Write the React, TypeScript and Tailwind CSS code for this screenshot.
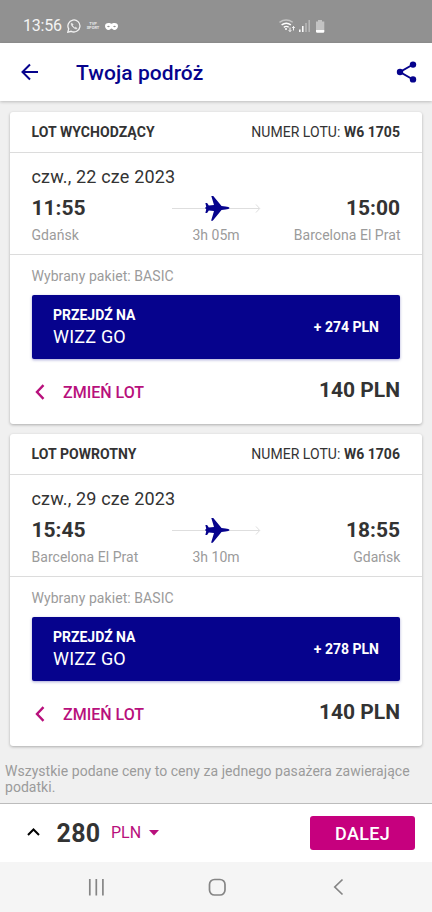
import React from "react";

type Flight = {
  title: string;
  number: string;
  date: string;
  departure: string;
  arrival: string;
  from: string;
  to: string;
  duration: string;
  upgrade: string;
};

const flights: Flight[] = [
  {
    title: "LOT WYCHODZĄCY",
    number: "W6 1705",
    date: "czw., 22 cze 2023",
    departure: "11:55",
    arrival: "15:00",
    from: "Gdańsk",
    to: "Barcelona El Prat",
    duration: "3h 05m",
    upgrade: "+ 274 PLN",
  },
  {
    title: "LOT POWROTNY",
    number: "W6 1706",
    date: "czw., 29 cze 2023",
    departure: "15:45",
    arrival: "18:55",
    from: "Barcelona El Prat",
    to: "Gdańsk",
    duration: "3h 10m",
    upgrade: "+ 278 PLN",
  },
];

function WhatsAppIcon() {
  return (
    <svg width="14" height="14" viewBox="0 0 14 14" fill="none" stroke="#f2f2f2">
      <path d="M.8 13.200l.9-3.300A6 6 0 1 1 4.200 12.300z" strokeWidth="1.300" />
      <path d="M4.700 3.900c-1 .9-.4 2.600 1.200 4.200s3.400 2.300 4.300 1.300l-1.500-1.200-.9.600C6.900 8.400 6 7.500 5.500 6.500l.6-.8z" fill="#f2f2f2" strokeWidth=".5" />
    </svg>
  );
}

function MaskIcon() {
  return (
    <svg width="13" height="9" viewBox="0 0 13 9">
      <path fill="#fff" fillRule="evenodd" d="M3.500 1C5 1 5.600 1.700 6.500 1.700S8 1 9.500 1C11.700 1 13 2.200 13 4c0 2.300-1.600 4-3.600 4C7.900 8 7.400 6.600 6.500 6.600S5.100 8 3.600 8C1.600 8 0 6.300 0 4c0-1.800 1.300-3 3.500-3zM2 4.600c.9.900 2.100.9 2.900 0-.8-1.100-2.100-1.100-2.900 0zm6.100 0c.8.900 2 .9 2.900 0-.8-1.100-2.100-1.100-2.900 0z" />
    </svg>
  );
}

function StatusIcons() {
  return (
    <svg width="48" height="16" viewBox="278 18 48 16" fill="none">
      <path d="M279.500 22.300q6.700-4.600 13.200 0" stroke="#c3c3c3" strokeWidth="1.400" />
      <path d="M281.600 24.900q4.700-3.400 9.300 0M283.800 27.300q2.600-1.800 4.900 0" stroke="#fff" strokeWidth="1.400" />
      <circle cx="286" cy="29" r="1" fill="#fff" />
      <path d="M290 27.500v4m-1.300-1.300 1.300 1.400 1.300-1.400M293.500 30.500V26.500m-1.300 1.400 1.300-1.400 1.300 1.400" stroke="#fff" strokeWidth=".9" />
      <path d="M299.800 29.500V32M302.800 26v6" stroke="#fff" strokeWidth="1.500" />
      <path d="M306 23v9M309.200 20v12" stroke="#b9b9b9" strokeWidth="1.500" />
      <path d="M316 21.500h2V20h4v1.500h2.300V30H316z" fill="#c3c3c3" />
      <path d="M316 30h8.300v1.500q0 1.200-1.200 1.200h-5.900q-1.200 0-1.200-1.200z" fill="#fff" />
    </svg>
  );
}

function PlaneRoute() {
  return (
    <svg className="block" width="90" height="26" viewBox="171 195 90 26" fill="none">
      <path d="M172 207.500h87.500M256 203.500l3.700 4-3.700 4" stroke="#dedede" strokeWidth="1" />
      <path
        fill="#06038d"
        d="M229.500 207c0 .8-2 1.300-4 1.500l-4 .6-1.800 2.200-7 8.400h-1.600l2.900-9.600-5.200-.6-1.700 2.500h-1.700l.8-3.800-1.200-1.200 1.200-1.200-.8-3.800h1.700l1.700 2.500 5.200-.6-2.900-9.600h1.600l7 8.400 1.800 2.200 4 .6c2 .2 4 .7 4 1.500z"
      />
    </svg>
  );
}

function FlightCard({ f }: { f: Flight }) {
  return (
    <section className="h-[312px] rounded-[3px] bg-white shadow-[0_1px_3px_rgba(0,0,0,0.28)]">
      <div className="flex h-[41px] items-center justify-between border-b border-[#dcdcdc] pr-[22px] pl-[21.500px] text-[14px] leading-5">
        <h2 className="font-bold tracking-[0.070px]">{f.title}</h2>
        <p className="tracking-[0.03px]">
          NUMER LOTU: <b>{f.number}</b>
        </p>
      </div>
      <div className="h-[102px] border-b border-[#dcdcdc] pr-[22px] pl-[21.500px] pt-[13px]">
        <p className="text-[18px] leading-[22px] tracking-[0.170px]">{f.date}</p>
        <div className="grid grid-cols-[1fr_90px_1fr] pt-2 text-[21px] leading-6 font-bold">
          <span>{f.departure}</span>
          <PlaneRoute />
          <span className="text-right">{f.arrival}</span>
        </div>
        <div className="-mr-[0.500px] grid grid-cols-[1fr_60px_1fr] pt-[3px] text-[14px] leading-5 tracking-[0.030px] text-[#9b9b9b]">
          <span>{f.from}</span>
          <span className="text-center whitespace-nowrap">{f.duration}</span>
          <span className="text-right">{f.to}</span>
        </div>
      </div>
      <div className="pr-[22px] pl-[21.500px] pt-[11px]">
        <p className="text-[14px] leading-5 tracking-[0.070px] text-[#9b9b9b]">Wybrany pakiet: BASIC</p>
        <button className="mt-[9px] flex h-16 w-full items-center justify-between rounded-[2px] bg-[#06038d] pr-[21px] pl-[21.500px] text-left text-white shadow-[0_1px_3px_rgba(6,3,141,0.35)]">
          <span className="flex flex-col">
            <span className="text-[14px] leading-5 font-bold">PRZEJDŹ NA</span>
            <span className="text-[18px] leading-6 tracking-[0.200px]">WIZZ GO</span>
          </span>
          <span className="pt-px text-[14px] font-bold">{f.upgrade}</span>
        </button>
        <div className="flex h-[62px] items-center justify-between">
          <button className="flex items-center pt-[6px] pl-[3px] text-[16px] leading-6 font-medium text-[#b8107c]">
            <svg className="-mt-[3px]" width="10" height="16" viewBox="0 0 10 16" fill="none">
              <path d="M8.500 1.200 2 8l6.500 6.800" stroke="currentColor" strokeWidth="2.400" />
            </svg>
            <span className="pl-[18.500px]">ZMIEŃ LOT</span>
          </button>
          <span className="text-[21px] leading-6 font-bold">140 PLN</span>
        </div>
      </div>
    </section>
  );
}

export default function App() {
  return (
    <div className="flex h-[912px] w-[432px] flex-col overflow-hidden bg-[#f0f0f0] font-[Roboto,sans-serif] text-[#333]">
      <div className="flex h-[43px] shrink-0 items-center bg-[#919191] pt-[9px] pl-[23px] text-white">
        <span className="w-[44px] text-[16px] leading-5 tracking-[-0.200px] text-[#f4f4f4]">13:56</span>
        <WhatsAppIcon />
        <span className="flex w-[24px] flex-col items-center text-[4px] leading-[4px] font-bold text-[#e8e8e8]">
          <span>TVP</span>
          <span>SPORT</span>
        </span>
        <MaskIcon />
        <span className="w-[160px]" />
        <StatusIcons />
      </div>
      <header className="z-10 flex h-[58px] shrink-0 items-center bg-white pl-[21px] text-[#06038d] shadow-[0_1px_3px_rgba(0,0,0,0.22)]">
        <svg width="18" height="18" viewBox="0 0 18 18" fill="none" stroke="currentColor" strokeWidth="2">
          <path d="M17 9H2M9 1.500 1.500 9 9 16.500" />
        </svg>
        <h1 className="w-[357px] pt-px pl-[37px] text-[21px] leading-7 font-medium tracking-[0.060px]">Twoja podróż</h1>
        <svg width="21" height="22" viewBox="0 0 21 22" fill="currentColor">
          <path d="M17 3.500 4 11l13 7.500" fill="none" stroke="currentColor" strokeWidth="2" />
          <circle cx="17" cy="3.600" r="3.200" />
          <circle cx="4" cy="11" r="3.200" />
          <circle cx="17" cy="18.400" r="3.200" />
        </svg>
      </header>
      <main className="flex h-[702px] shrink-0 flex-col gap-[10px] px-[10px] pt-[11px]">
        {flights.map((f) => (
          <FlightCard key={f.number} f={f} />
        ))}
        <p className="-mx-[5px] pt-[7px] text-[14px] leading-4 tracking-[0.035px] text-[#9b9b9b]">
          Wszystkie podane ceny to ceny za jednego pasażera zawierające
          <br />
          podatki.
        </p>
      </main>
      <footer className="flex h-[59px] shrink-0 items-center border-t border-[#bcbcbc] bg-white pr-[17px] pl-[27px]">
        <svg className="-mt-[3px]" width="14" height="9" viewBox="0 0 14 9" fill="none" stroke="#000" strokeWidth="2">
          <path d="M1 8l5.500-5.500L12 8" />
        </svg>
        <span className="w-[70px] pt-[2px] pl-[15.500px] text-[25px] leading-8 font-bold tracking-[0.300px]">280</span>
        <span className="w-[38px] text-[16px] leading-6 text-[#b8107c]">PLN</span>
        <svg width="10" height="6" viewBox="0 0 10 6">
          <path d="M0 0h10L5 5.500z" fill="#b8107c" />
        </svg>
        <button className="ml-auto h-[34px] w-[105px] rounded-[3px] bg-[#c6007e] text-[18px] font-medium tracking-[0.300px] text-white">
          DALEJ
        </button>
      </footer>
      <nav className="flex h-[50px] shrink-0 items-center bg-[#f5f5f5] pl-[88px]">
        <svg width="258" height="18" viewBox="88 878 258 18" fill="none" stroke="#858585" strokeWidth="1.700">
          <path d="M89.800 879v16.500M96.300 879v16.500M102.900 879v16.500" />
          <rect x="209.500" y="879.500" width="15.500" height="15.500" rx="5" />
          <path d="M342.500 879.500l-7.700 7.500 7.700 7.500" />
        </svg>
      </nav>
    </div>
  );
}
